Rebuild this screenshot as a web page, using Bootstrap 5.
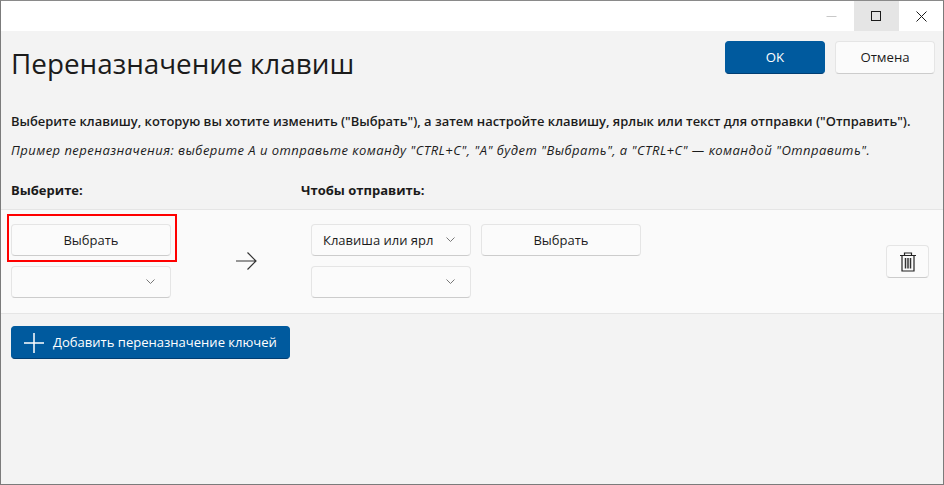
<!DOCTYPE html>
<html lang="ru"><head><meta charset="utf-8"><title>Переназначение клавиш</title>
<link href="https://cdn.jsdelivr.net/npm/bootstrap@5.3.0/dist/css/bootstrap.min.css" rel="stylesheet">
<style>
html,body{height:100%;margin:0}
body{font-family:"Open Sans","Noto Sans",sans-serif;background:#f3f3f3;color:#1b1b1b;font-size:13px;overflow:hidden}
.win{width:944px;height:485px;border:1px solid #7b7b7b;border-top-color:#8a8a8a;display:flex;flex-direction:column;background:#f3f3f3}
.tbar{height:30px;background:#fff;flex:none}
.tb{width:45px;height:30px;display:flex;align-items:center;justify-content:center}
.tb-end{width:44px}
.tb-on{background:#e5e5e5}
.head{padding:10px 8px 0 10px;height:62px;flex:none}
.ttl{font-size:27.85px;font-weight:400;line-height:46px;margin:0;position:relative;top:-1px}
.fbtn{height:33px;border-radius:4px;font-size:13.2px;line-height:1;padding:0;display:flex;align-items:center;justify-content:center;color:#1b1b1b;background:#fbfbfb;border:1px solid #e5e5e5;border-bottom-color:#ccc}
.fbtn:hover{background:#fbfbfb;border-color:#e5e5e5}
.acc{background:#005a9e;border-color:#005a9e;border-bottom-color:#003e73;color:#fff}
.acc:hover{background:#005a9e;color:#fff}
.w-act{width:100px}
.act-gap{gap:10px}
.w-key{width:160px;height:32px;font-size:13px}
.dsc{padding:0 10px;margin-top:19px}
.dsc p{margin:0;line-height:18px}
.l1{font-weight:600;font-size:12.93px;white-space:nowrap}
.l2{font-style:italic;font-size:13px;letter-spacing:.46px;margin-top:11px!important;white-space:nowrap}
.cols{padding:0 10px;margin-top:22px;height:28px;font-weight:700;font-size:13px}
.c1{width:290px}
.rowbox{background:#fafafa;border-top:1px solid #e5e5e5;border-bottom:1px solid #e5e5e5;height:105px;padding:14px 10px 0;flex:none}
.hl{position:absolute;left:-4px;top:-10px;width:170px;height:48px;border:2px solid #f00;pointer-events:none}
.drop{justify-content:space-between;padding:0 15px 0 11px;white-space:nowrap}
.drop span{width:113px;text-align:left}
.stack{gap:10px}
.col-l{width:160px}
.arr{width:140px;padding:0 0 0 65px}
.add{width:279px;height:33px;margin:12px 0 0 10px;justify-content:flex-start;padding-left:11px;gap:8px;font-size:13.05px;flex:none}
.del{width:43px;height:33px;margin:21px 4px 0 auto;display:flex;align-items:center;justify-content:center}
.key-gap{gap:10px}
</style></head><body>
<div class="win">
 <div class="tbar d-flex justify-content-end">
  <div class="tb"><svg width="11" height="11" viewBox="0 0 11 11"><path d="M.5 5.500h10" stroke="#c8c8c8"/></svg></div>
  <div class="tb tb-on"><svg width="11" height="11" viewBox="0 0 11 11"><rect x=".5" y=".5" width="9" height="9" fill="none" stroke="#1b1b1b"/></svg></div>
  <div class="tb tb-end"><svg width="11" height="11" viewBox="0 0 11 11"><path d="M.5.5l10 10M10.500.5l-10 10" stroke="#1b1b1b" fill="none"/></svg></div>
 </div>
 <div class="head d-flex justify-content-between">
  <h1 class="ttl">Переназначение клавиш</h1>
  <div class="d-flex act-gap"><button class="btn fbtn acc w-act">OK</button><button class="btn fbtn w-act">Отмена</button></div>
 </div>
 <div class="dsc">
  <p class="l1">Выберите клавишу, которую вы хотите изменить ("Выбрать"), а затем настройте клавишу, ярлык или текст для отправки ("Отправить").</p>
  <p class="l2">Пример переназначения: выберите A и отправьте команду "CTRL+C", "A" будет "Выбрать", а "CTRL+C" — командой "Отправить".</p>
 </div>
 <div class="cols d-flex"><div class="c1">Выберите:</div><div>Чтобы отправить:</div></div>
 <div class="rowbox d-flex">
  <div class="col-l d-flex flex-column stack position-relative">
   <button class="btn fbtn w-key">Выбрать</button>
   <div class="hl"></div>
   <button class="btn fbtn w-key drop"><span></span><svg width="9" height="6" viewBox="0 0 9 6"><path d="M.5.5l4 4 4-4" fill="none" stroke="#777"/></svg></button>
  </div>
  <div class="arr d-flex align-items-center pb-3"><svg width="21" height="20" viewBox="0 0 21 20"><path d="M0 10h20M11.500 1.500L20 10l-8.500 8.500" fill="none" stroke="#333" stroke-width="1.200"/></svg></div>
  <div class="d-flex flex-column stack">
   <div class="d-flex key-gap">
    <button class="btn fbtn w-key drop"><span>Клавиша или ярл</span><svg width="9" height="6" viewBox="0 0 9 6"><path d="M.5.5l4 4 4-4" fill="none" stroke="#777"/></svg></button>
    <button class="btn fbtn w-key">Выбрать</button>
   </div>
   <button class="btn fbtn w-key drop"><span></span><svg width="9" height="6" viewBox="0 0 9 6"><path d="M.5.5l4 4 4-4" fill="none" stroke="#777"/></svg></button>
  </div>
  <button class="btn fbtn del" aria-label="Удалить"><svg width="16" height="20" viewBox="0 0 16 20"><path d="M0 3.500h16M4.500 3.500V1h7v2.500M2 3.500V19h12V3.500" fill="none" stroke="#222" stroke-width="1.200"/><path d="M5.500 6v10.500M8 6v10.500M10.500 6v10.500" fill="none" stroke="#333" stroke-width="1.500"/></svg></button>
 </div>
 <button class="btn fbtn acc add"><svg width="22" height="22" viewBox="0 0 22 22"><path d="M11 1v20M1 11h20" stroke="#fff" stroke-width="1.500"/></svg>Добавить переназначение ключей</button>
</div>
</body></html>
